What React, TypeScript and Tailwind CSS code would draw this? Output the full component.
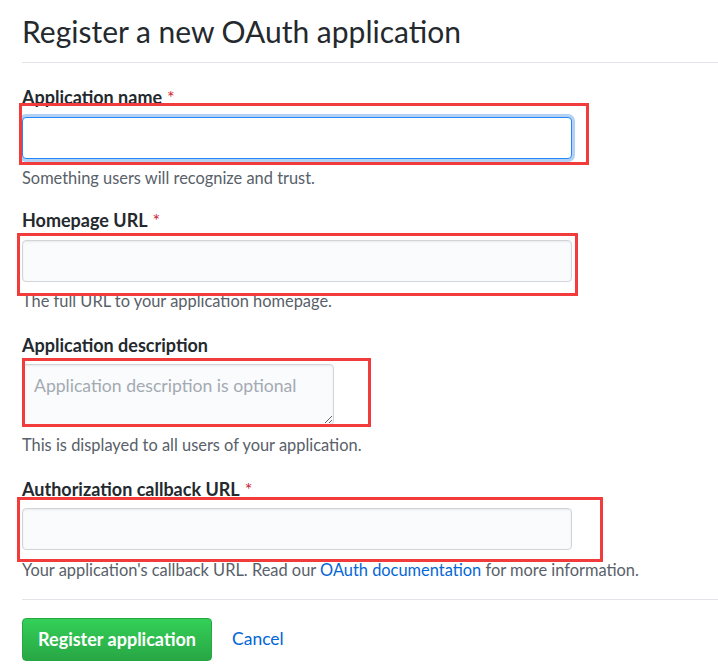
import React from "react";

function Label({ text, required }: { text: string; required?: boolean }) {
  return (
    <div className="text-[18px] leading-[24px] font-bold text-[#24292e]">
      {text}
      {required && <span className="text-[#cb2431] font-normal ml-[5px]">*</span>}
    </div>
  );
}

function Help({ children, className }: { children: React.ReactNode; className?: string }) {
  return <div className={"text-[16.4px] leading-[20px] text-[#586069] " + (className || "")}>{children}</div>;
}

export default function App() {
  return (
    <div className="relative w-[718px] h-[672px] bg-white overflow-hidden font-['Lato',sans-serif] text-[#24292e]">
      <div className="pl-[22px]">
        <h1 className="pt-[13px] text-[30px] leading-[36px] font-normal">Register a new OAuth application</h1>
        <div className="mt-[13px] h-px bg-[#e1e4e8]" />

        <div className="mt-[22px]">
          <Label text="Application name" required />
        </div>
        <input
          className="mt-[8px] block w-[550px] h-[42px] rounded-[4px] border border-[#2188ff] bg-white shadow-[0_0_0_3px_rgba(3,102,214,0.3)] outline-none"
          type="text"
        />
        <Help className="mt-[9px]">Something users will recognize and trust.</Help>

        <div className="mt-[20px]">
          <Label text="Homepage URL" required />
        </div>
        <input
          className="mt-[8px] block w-[550px] h-[42px] rounded-[4px] border border-[#d1d5da] bg-[#fafbfc] shadow-[inset_0_1px_2px_rgba(27,31,35,0.075)] outline-none"
          type="text"
        />
        <Help className="mt-[9px]">The full URL to your application homepage.</Help>

        <div className="mt-[22px]">
          <Label text="Application description" />
        </div>
        <textarea
          className="mt-[7px] block w-[312px] h-[61px] rounded-[4px] border border-[#d1d5da] bg-[#fafbfc] px-[11px] py-[8px] text-[17.6px] leading-[26px] placeholder:text-[#a3aab3] shadow-[inset_0_1px_2px_rgba(27,31,35,0.075)] outline-none"
          placeholder="Application description is optional"
        />
        <Help className="mt-[10px]">This is displayed to all users of your application.</Help>

        <div className="mt-[22px]">
          <Label text="Authorization callback URL" required />
        </div>
        <input
          className="mt-[7px] block w-[550px] h-[42px] rounded-[4px] border border-[#d1d5da] bg-[#fafbfc] shadow-[inset_0_1px_2px_rgba(27,31,35,0.075)] outline-none"
          type="text"
        />
        <Help className="mt-[10px]">
          Your application's callback URL. Read our <span className="text-[#0366d6]">OAuth documentation</span> for more information.
        </Help>

        <div className="mt-[19px] h-px bg-[#e1e4e8]" />

        <div className="mt-[18px] flex items-center">
          <button className="w-[190px] h-[43px] rounded-[4px] border border-[#28a745] bg-gradient-to-b from-[#34d058] to-[#28a745] text-white text-[18px] font-bold">
            Register application
          </button>
          <span className="ml-[20px] text-[17.5px] text-[#0366d6]">Cancel</span>
        </div>
      </div>

      <div className="absolute left-[19px] top-[103px] w-[570px] h-[62px] border-[3px] border-[#f23b3b] pointer-events-none" />
      <div className="absolute left-[17px] top-[233px] w-[561px] h-[63px] border-[3px] border-[#f23b3b] pointer-events-none" />
      <div className="absolute left-[22px] top-[358px] w-[349px] h-[69px] border-[3px] border-[#f23b3b] pointer-events-none" />
      <div className="absolute left-[17px] top-[497px] w-[586px] h-[65px] border-[3px] border-[#f23b3b] pointer-events-none" />
    </div>
  );
}
